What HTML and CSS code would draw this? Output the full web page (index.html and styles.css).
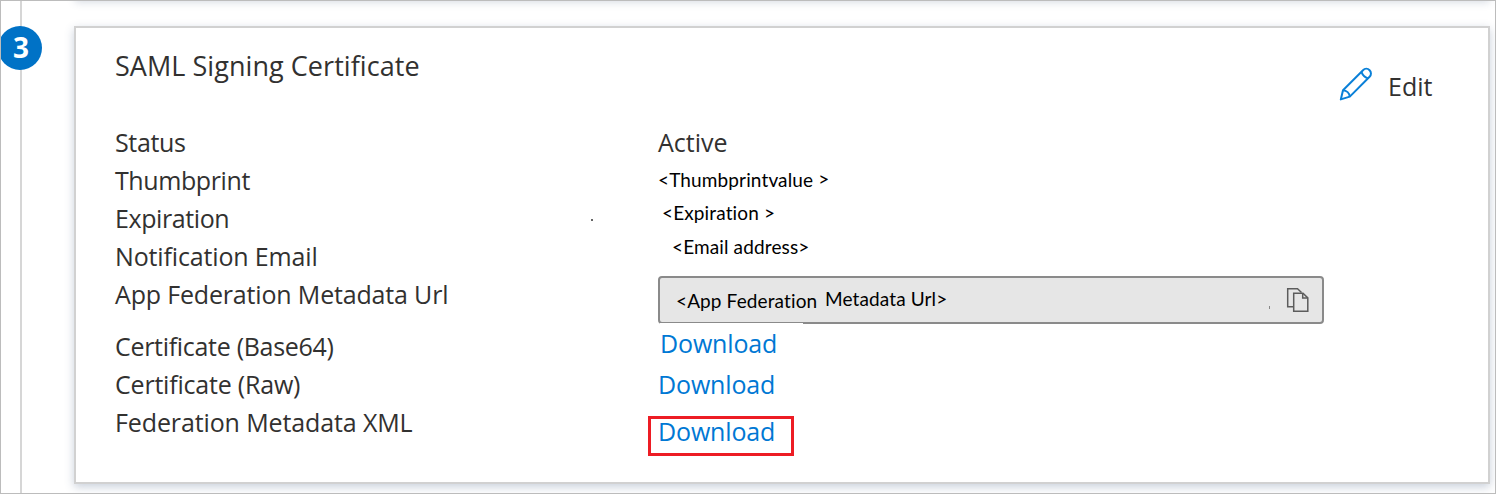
FILE: index.html
```html
<!DOCTYPE html>
<html lang="en">
<head>
<meta charset="utf-8">
<title>SAML Signing Certificate</title>
<link rel="stylesheet" href="styles.css">
</head>
<body>
<div class="frame">
  <div class="prev-card"></div>
  <div class="rail"><span class="step">3</span></div>
  <section class="card">
    <div class="labels">
      <h2 class="title">SAML Signing Certificate</h2>
      <div class="label status">Status</div>
      <div class="label thumb">Thumbprint</div>
      <div class="label expir">Expiration</div>
      <div class="label notif">Notification Email</div>
      <div class="label appfed">App Federation Metadata Url</div>
      <div class="label base64">Certificate (Base64)</div>
      <div class="label raw">Certificate (Raw)</div>
      <div class="label xml">Federation Metadata XML</div>
    </div>
    <span class="speck"></span>
    <div class="values">
      <div class="label active">Active</div>
      <div class="note note-thumb">&lt;Thumbprintvalue <span class="close">&gt;</span></div>
      <div class="note note-exp">&lt;Expiration &gt;</div>
      <div class="note note-mail">&lt;Email address&gt;</div>
      <div class="urlbox">
        <span class="url-a">&lt;App Federation</span>
        <span class="url-b">Metadata Url&gt;</span>
        <span class="dot"></span>
        <svg class="copy" width="24" height="26" viewBox="0 0 24 26" fill="none" stroke="#5c5c5c" stroke-width="1.5">
          <path d="M7.5 19.7H1.7V1.7H11.5L15.5 5.5"/>
          <path d="M7.7 6.2H17L21.8 10.9V24.2H7.7Z"/>
          <path d="M16.7 6.2V10.9H21.8"/>
        </svg>
        <span class="edge"></span>
      </div>
      <a class="link first">Download</a>
      <a class="link second">Download</a>
      <a class="link marked">Download</a>
    </div>
    <div class="edit">
      <svg class="pencil" width="34" height="34" viewBox="0 0 34 34" fill="none" stroke="#0a80d8" stroke-width="2" stroke-linejoin="round">
        <path d="M1.8 32.4L4 23.2L24 3.2C25.8 1.4 28.8 1.4 30.6 3.2C32.4 5 32.4 8 30.6 9.8L10.8 29.6Z"/>
        <path d="M22.4 4.8C23.6 8 25.8 10.2 29 11.4"/>
        <path d="M4 23.2C7.6 23.5 10.4 26.2 10.8 29.6"/>
      </svg>
      <span class="edit-text">Edit</span>
    </div>
  </section>
</div>
</body>
</html>
```
FILE: styles.css
```css
* { box-sizing: border-box; }
body { margin: 0; background: #fff; }
.frame {
  position: relative;
  display: flex;
  width: 1496px;
  height: 494px;
  border: 1px solid #bcbcbc;
  overflow: hidden;
  font-family: "Open Sans", "Noto Sans", sans-serif;
  font-size: 25px;
  color: #323130;
}
.prev-card {
  position: absolute;
  left: 74px;
  top: -20px;
  width: 1415px;
  height: 19px;
  box-shadow: 0 2px 8px rgba(60, 80, 120, .22);
}
.rail {
  width: 73px;
  flex: none;
  padding-top: 25px;
  background: linear-gradient(#d6d6d6, #d6d6d6) 19px 0 / 2px 100% no-repeat;
}
.step {
  display: block;
  width: 44px;
  height: 44px;
  margin-left: -3px;
  padding-left: 2px;
  border-radius: 50%;
  background: #0072c6;
  color: #fff;
  font-weight: 700;
  font-size: 28px;
  line-height: 43px;
  text-align: center;
}
.card {
  display: flex;
  flex: none;
  width: 1416px;
  height: 458px;
  margin-top: 25px;
  border: 2px solid #d1d1d1;
  background: #fff;
  box-shadow: 0 3px 9px rgba(60, 85, 125, .28);
}
.labels { width: 514px; padding-left: 39px; white-space: nowrap; }
.title { margin: 19px 0 38px; font-size: 27px; font-weight: 400; line-height: 38px; letter-spacing: .05px; }
.label { line-height: 38px; white-space: nowrap; }
.status { letter-spacing: -.35px; }
.thumb, .expir { letter-spacing: -.4px; }
.notif { letter-spacing: -.15px; }
.appfed { letter-spacing: -.17px; }
.base64 { margin-top: 14px; letter-spacing: -.3px; }
.raw { letter-spacing: -.2px; }
.xml { letter-spacing: -.12px; }
.speck { width: 2px; height: 2px; margin: 191px 0 0 1px; background: #666; }
.values { width: 666px; margin-left: 65px; padding-top: 95px; }
.note {
  font-family: Lato, sans-serif;
  font-size: 19px;
  letter-spacing: .13px;
  line-height: 34px;
  color: #000;
  white-space: nowrap;
}
.note-thumb { margin-top: 2px; height: 33px; }
.close { position: relative; top: -1px; }
.note-exp { padding-left: 4px; }
.note-mail { padding-left: 14px; }
.urlbox {
  position: relative;
  display: flex;
  height: 48px;
  margin-top: 12px;
  padding-left: 16px;
  border: 2px solid #8a8a8a;
  border-radius: 4px;
  background: #e6e6e6;
  font-family: Lato, sans-serif;
  font-size: 19px;
  letter-spacing: .12px;
  color: #000;
  white-space: nowrap;
}
.url-a { width: 149px; line-height: 46px; }
.url-b { line-height: 42px; }
.dot { width: 1px; height: 3px; margin: 28px 16px 0 auto; background: #888; }
.copy { margin: 9px 12px 0 0; }
.edge { position: absolute; left: 0; top: 45px; width: 143px; height: 1px; background: #fff; }
.link { display: block; color: #0078d4; line-height: 36px; letter-spacing: -.15px; }
.first { margin: 1px 0 5px 2px; }
.marked {
  width: 146px;
  height: 40px;
  margin: 14px 0 0 -10px;
  padding-left: 7px;
  border: 3px solid #ed1c24;
  line-height: 25px;
}
.edit { display: flex; margin: 39px 0 0 15px; }
.edit-text { margin-left: 15px; line-height: 38px; }
```
